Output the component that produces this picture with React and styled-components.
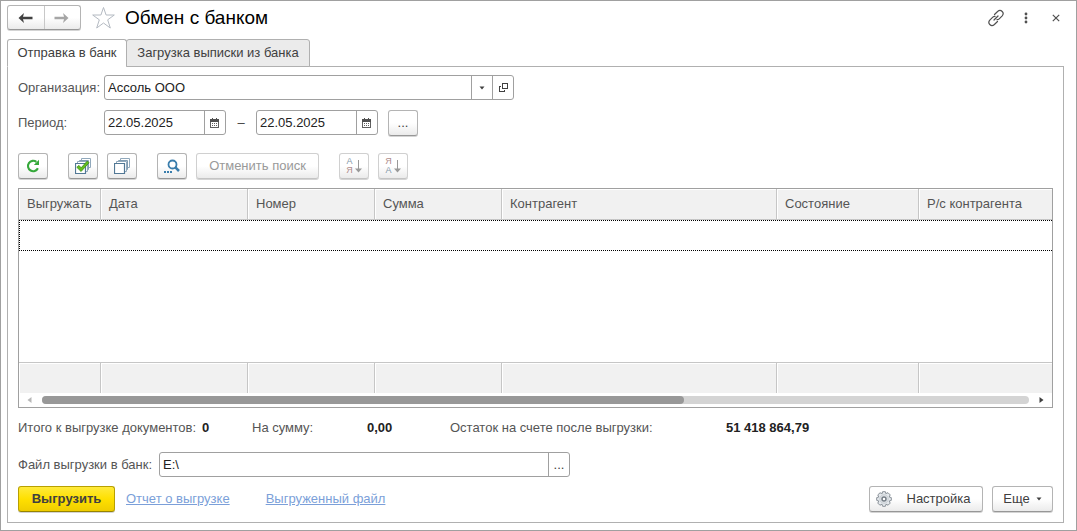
import React from "react";
import styled, { createGlobalStyle, css } from "styled-components";

const GlobalStyle = createGlobalStyle`
  * { box-sizing: border-box; }
  body {
    margin: 0;
    background: #fff;
    color: #404040;
    font: 13px/16px "Liberation Sans", Arial, sans-serif;
  }
  button, input { font: inherit; color: inherit; margin: 0; }
`;

const Window = styled.div`
  min-height: 100vh;
  display: flex;
  flex-direction: column;
  padding: 4px 12px 7px 6px;
  border: 1px solid #a0a0a0;
`;

const TitleBar = styled.header`
  display: flex;
  align-items: center;
  height: 25px;
`;

const raised = css`
  background: linear-gradient(#fff 0%, #fff 50%, #ebebeb 100%);
  border: 1px solid #b4b4b4;
  border-bottom-color: #979797;
  border-radius: 3px;
  box-shadow: 0 1px 0 #d4d4d4;
`;

const History = styled.nav`
  display: flex;
  width: 74px;
  height: 25px;
  ${raised}
`;

const HistoryButton = styled.button`
  flex: 1;
  display: grid;
  place-items: center;
  padding: 0;
  border: 0;
  background: none;
  color: #404040;
  &:disabled { color: #a6a6a6; }
  & + & { border-left: 1px solid #c8c8c8; }
`;

const PlainButton = styled.button`
  display: grid;
  place-items: center;
  width: 24px;
  height: 24px;
  padding: 0;
  border: 0;
  background: none;
  color: #505050;
`;

const Favorite = styled(PlainButton)`
  margin-left: 10px;
`;

const Title = styled.h1`
  flex: 1;
  margin: 0 0 0 10px;
  color: #000;
  font-size: 19px;
  line-height: 24px;
  font-weight: 400;
`;

const WindowTools = styled.div`
  display: flex;
  gap: 6px;
  margin-right: -4px;
`;

const Tabs = styled.div`
  display: flex;
  margin-top: 9px;
`;

const Tab = styled.button`
  position: relative;
  width: ${(p) => p.$width}px;
  height: 28px;
  margin-right: -1px;
  padding: 0 0 1px;
  border: 1px solid #b0b0b0;
  border-bottom-color: ${(p) => (p.$active ? "#fff" : "#b0b0b0")};
  border-radius: 3px 3px 0 0;
  background: ${(p) => (p.$active ? "#fff" : "#ebebeb")};
  z-index: 1;
`;

const Panel = styled.main`
  flex: 1;
  display: flex;
  flex-direction: column;
  margin-top: -1px;
  padding: 8px 10px 10px;
  border: 1px solid #b0b0b0;
`;

const FieldRow = styled.div`
  display: flex;
  align-items: center;
  height: 25px;
  margin-top: ${(p) => p.$top || 0}px;
`;

const Label = styled.label`
  width: ${(p) => p.$width}px;
  flex: none;
  color: #555;
`;

const Field = styled.div`
  display: flex;
  width: ${(p) => p.$width}px;
  height: 25px;
  border: 1px solid #a0a0a0;
  border-radius: 3px;
  background: #fff;
`;

const Input = styled.input`
  flex: 1;
  min-width: 0;
  padding: 0 3px;
  border: 0;
  outline: 0;
  background: none;
  color: #222;
`;

const FieldButton = styled.button`
  display: grid;
  place-items: center;
  width: 21px;
  padding: 0;
  border: 0;
  border-left: 1px solid #a0a0a0;
  background: none;
`;

const Dash = styled.span`
  width: 30px;
  text-align: center;
`;

const Button = styled.button`
  display: flex;
  align-items: center;
  justify-content: center;
  flex: none;
  width: ${(p) => p.$width || 30}px;
  height: 26px;
  margin-left: ${(p) => p.$left || 0}px;
  padding: 0;
  ${raised}
  &:disabled {
    color: #999;
    border-color: #d0d0d0;
    border-bottom-color: #c4c4c4;
  }
`;

const PrimaryButton = styled(Button)`
  border-color: #b8a000;
  border-bottom-color: #978400;
  background: linear-gradient(#ffea3c, #ffe000 50%, #efcd00);
  font-weight: 700;
`;

const Toolbar = styled.div`
  display: flex;
  margin-top: 18px;
`;

const TableFrame = styled.section`
  flex: 1;
  display: flex;
  flex-direction: column;
  min-height: 219px;
  margin-top: 9px;
  border: 1px solid #a0a0a0;
`;

const TableArea = styled.div`
  flex: 1;
  display: grid;
`;

const Table = styled.table`
  width: 100%;
  table-layout: fixed;
  border-collapse: separate;
  border-spacing: 0;
`;

const Column = styled.col`
  width: ${(p) => (p.$width ? `${p.$width}px` : "auto")};
`;

const shaded = css`
  background: #f1f1f1;
  border-right: 1px solid #c6c6c6;
  box-shadow: inset 1px 1px 0 #fff;
  &:last-child { border-right: 0; }
`;

const HeadCell = styled.th`
  height: 31px;
  padding: 0 8px;
  border-bottom: 1px solid #c6c6c6;
  color: #555;
  font-weight: 400;
  text-align: left;
  white-space: nowrap;
  ${shaded}
`;

const ActiveCell = styled.td`
  height: 31px;
  padding: 0;
  border: 1px dotted #000;
  border-right: 0;
`;

const EmptyCell = styled.td`
  padding: 0;
`;

const FootCell = styled.td`
  height: 31px;
  padding: 0;
  border-top: 1px solid #c6c6c6;
  ${shaded}
`;

const Scroll = styled.div`
  display: flex;
  align-items: center;
  justify-content: space-between;
  height: 14px;
  padding: 0 8px;
`;

const Track = styled.div`
  flex: 1;
  height: 8px;
  margin: 0 10px;
  border-radius: 4px;
  background: #d4d4d4;
`;

const Thumb = styled.div`
  width: 65%;
  height: 8px;
  border-radius: 4px;
  background: #989898;
`;

const Totals = styled.dl`
  display: flex;
  margin: 12px 0 0;
`;

const Term = styled.dt`
  width: ${(p) => p.$width}px;
  color: #555;
`;

const Value = styled.dd`
  width: ${(p) => p.$width}px;
  margin: 0;
  color: #222;
  font-weight: 700;
`;

const Footer = styled.footer`
  display: flex;
  align-items: center;
  margin-top: 9px;
`;

const Link = styled.a`
  margin-left: ${(p) => p.$left}px;
  color: #7b9fd9;
  text-decoration: underline;
`;

const Spacer = styled.div`
  flex: 1;
`;

const ButtonText = styled.span`
  margin: 0 ${(p) => p.$right || 0}px 0 ${(p) => p.$left || 0}px;
`;

const SortIcon = styled.span`
  display: flex;
  align-items: center;
  gap: 2px;
`;

const SortLetters = styled.span`
  display: flex;
  flex-direction: column;
  font-size: 9px;
  line-height: 9px;
`;

const SortLetter = styled.span`
  color: ${(p) => (p.$last ? "#b08c8c" : "#8698aa")};
`;

const Arrow = ({ flip }) => (
  <svg width="16" height="12" viewBox="0 0 16 12">
    <path
      d="M0.5 6 6 1 5 4.7H14.5V7.3H5L6 11Z"
      fill="currentColor"
      transform={flip ? "matrix(-1 0 0 1 15 0)" : undefined}
    />
  </svg>
);

const Star = () => (
  <svg width="24" height="24" viewBox="0 0 24 24" fill="none" stroke="#b4bac2">
    <path d="M12.5 1.5 15.1 9H23.3L16.7 13.8 19.3 22 12.5 17 5.7 22 8.3 13.8 1.7 9H9.9Z" />
  </svg>
);

const LinkIcon = () => (
  <svg width="18" height="18" viewBox="0 0 18 18" fill="none" stroke="#505050" strokeWidth="1.2" strokeLinecap="round">
    <path d="M7.5 5.5 10.6 2.5C12 1.3 14 1.3 15.2 2.5 16.4 3.7 16.4 5.4 15.2 6.8L12.2 9.8C11.5 10.5 10.8 10.7 10 10.6" />
    <path d="M10.5 12.5 7.4 15.5C6 16.7 4 16.7 2.8 15.5 1.6 14.3 1.6 12.6 2.8 11.2L5.8 8.2C6.5 7.5 7.2 7.3 8 7.4" />
    <path d="M7 11 11 7" />
  </svg>
);

const Dots = () => (
  <svg width="4" height="12" viewBox="0 0 4 12" fill="#505050">
    <circle cx="2" cy="2" r="1.4" />
    <circle cx="2" cy="6" r="1.4" />
    <circle cx="2" cy="10" r="1.4" />
  </svg>
);

const Close = () => (
  <svg width="8" height="8" viewBox="0 0 8 8" stroke="#505050" strokeWidth="1.2">
    <path d="M0.8 0.8 7.2 7.2M7.2 0.8 0.8 7.2" />
  </svg>
);

const Caret = () => (
  <svg width="6" height="4" viewBox="0 0 6 4">
    <path d="M0.5 0.5H5.5L3 3.5Z" fill="#404040" />
  </svg>
);

const OpenIcon = () => (
  <svg width="9" height="9" viewBox="0 0 9 9" fill="none" stroke="#404040" shapeRendering="crispEdges">
    <path d="M3.5 0.5H8.5V5.5H3.5ZM2 3.5H0.5V8.5H5.5V7" />
  </svg>
);

const Calendar = () => (
  <svg width="10" height="10" viewBox="0 0 10 10" shapeRendering="crispEdges">
    <path d="M0.5 1.5H8.5V9.5H0.5Z" fill="#fff" stroke="#606060" />
    <path d="M0 1H9V4H0ZM2 0H3V1H2ZM6 0H7V1H6Z" fill="#505050" />
    <path d="M2 5.5H7M2 7.5H7" stroke="#606060" strokeDasharray="1 1" />
  </svg>
);

const Refresh = () => (
  <svg width="14" height="14" viewBox="0 0 14 14">
    <path d="M11.9 9.2A5.2 5.2 0 1 1 10.4 2.9" fill="none" stroke="#35a83a" strokeWidth="2.1" />
    <path d="M13 0.8V6H7.8Z" fill="#35a83a" />
  </svg>
);

const Sheets = ({ checked }) => (
  <svg width="16" height="16" viewBox="0 0 16 16" fill="#fff" stroke="#527895">
    <path d="M6.5 0.5H15.5V9.5H6.5Z" stroke="#91a9bc" />
    <path d="M4.5 2.5H13.5V11.5H4.5Z" stroke="#819cb1" />
    <path d="M2.5 3.5H12.5V13.5H2.5Z" stroke="#91a9bc" />
    <path d="M0.5 5.5H10.5V15.5H0.5Z" strokeWidth="1.2" />
    {checked && (
      <path d="M1.8 9.3 4 7.4 6.1 9.8 12.3 3 14 4.8 6.1 13.5Z" fill="#63be1c" stroke="#398b1a" strokeWidth="0.8" />
    )}
  </svg>
);

const Search = () => (
  <svg width="16" height="15" viewBox="0 0 16 15" fill="none" stroke="#397dac">
    <circle cx="8.5" cy="5.5" r="4" strokeWidth="1.8" />
    <path d="M11.4 8.4 15 12" strokeWidth="2.5" />
    <path d="M0 13H8" strokeWidth="2" strokeDasharray="2 1" />
  </svg>
);

const Sort = ({ letters }) => (
  <SortIcon aria-hidden="true">
    <SortLetters>
      {letters.map((letter) => (
        <SortLetter key={letter} $last={letter === "Я"}>{letter}</SortLetter>
      ))}
    </SortLetters>
    <svg width="7" height="14" viewBox="0 0 7 14">
      <path d="M3.5 1V11" stroke="#999" />
      <path d="M0 9.5H7L3.5 13.5Z" fill="#999" />
    </svg>
  </SortIcon>
);

const Gear = () => (
  <svg width="16" height="16" viewBox="0 0 16 16" fill="#e4e8ec" stroke="#8a9299">
    <path d="M6.6 0.7H9.4L9.8 2.6 12 1.7 14.2 3.9 13.2 6 15.3 6.6V9.4L13.2 10 14.2 12.1 12.1 14.2 10 13.2 9.4 15.3H6.6L6 13.2 3.9 14.2 1.8 12.1 2.8 10 0.7 9.4V6.6L2.8 6 1.8 3.9 4 1.8 6.2 2.6Z" />
    <circle cx="8" cy="8" r="4.2" stroke="#c5cbd0" />
    <circle cx="8" cy="8" r="2" fill="#fff" stroke="#747d85" strokeWidth="1.5" />
  </svg>
);

const ScrollArrow = ({ right }) => (
  <svg width="5" height="6" viewBox="0 0 5 6">
    <path d={right ? "M0.5 0V6L4.5 3Z" : "M4.5 0V6L0.5 3Z"} fill={right ? "#404040" : "#b8b8b8"} />
  </svg>
);

const columns = [
  ["Выгружать", 82],
  ["Дата", 147],
  ["Номер", 127],
  ["Сумма", 127],
  ["Контрагент", 275],
  ["Состояние", 142],
  ["Р/с контрагента", 0],
];

const DateField = ({ id, label }) => (
  <Field $width={122}>
    <Input id={id} aria-label={label} defaultValue="22.05.2025" />
    <FieldButton aria-label="Выбрать дату"><Calendar /></FieldButton>
  </Field>
);

export default function App() {
  return (
    <>
      <GlobalStyle />
      <Window>
        <TitleBar>
          <History>
            <HistoryButton aria-label="Назад"><Arrow /></HistoryButton>
            <HistoryButton aria-label="Вперед" disabled><Arrow flip /></HistoryButton>
          </History>
          <Favorite aria-label="В избранное"><Star /></Favorite>
          <Title>Обмен с банком</Title>
          <WindowTools>
            <PlainButton aria-label="Получить ссылку"><LinkIcon /></PlainButton>
            <PlainButton aria-label="Меню"><Dots /></PlainButton>
            <PlainButton aria-label="Закрыть"><Close /></PlainButton>
          </WindowTools>
        </TitleBar>

        <Tabs role="tablist">
          <Tab role="tab" aria-selected="true" $active $width={120}>Отправка в банк</Tab>
          <Tab role="tab" aria-selected="false" $width={184}>Загрузка выписки из банка</Tab>
        </Tabs>

        <Panel>
          <FieldRow>
            <Label htmlFor="organization" $width={86}>Организация:</Label>
            <Field $width={410}>
              <Input id="organization" defaultValue="Ассоль ООО" />
              <FieldButton aria-label="Выбрать из списка"><Caret /></FieldButton>
              <FieldButton aria-label="Открыть"><OpenIcon /></FieldButton>
            </Field>
          </FieldRow>
          <FieldRow $top={10}>
            <Label htmlFor="period-start" $width={86}>Период:</Label>
            <DateField id="period-start" label="Начало периода" />
            <Dash>–</Dash>
            <DateField id="period-end" label="Конец периода" />
            <Button $left={10} aria-label="Выбрать период">...</Button>
          </FieldRow>

          <Toolbar>
            <Button aria-label="Обновить"><Refresh /></Button>
            <Button $left={20} aria-label="Установить флажки"><Sheets checked /></Button>
            <Button $left={9} aria-label="Снять флажки"><Sheets /></Button>
            <Button $left={20} aria-label="Найти"><Search /></Button>
            <Button $left={9} $width={123} disabled>Отменить поиск</Button>
            <Button $left={20} disabled aria-label="Сортировать по возрастанию">
              <Sort letters={["А", "Я"]} />
            </Button>
            <Button $left={9} disabled aria-label="Сортировать по убыванию">
              <Sort letters={["Я", "А"]} />
            </Button>
          </Toolbar>

          <TableFrame>
            <TableArea>
              <Table>
                <colgroup>
                  {columns.map(([name, width]) => <Column key={name} $width={width} />)}
                </colgroup>
                <thead>
                  <tr>{columns.map(([name]) => <HeadCell key={name}>{name}</HeadCell>)}</tr>
                </thead>
                <tbody>
                  <tr><ActiveCell colSpan={columns.length} /></tr>
                  <tr><EmptyCell colSpan={columns.length} /></tr>
                </tbody>
                <tfoot>
                  <tr>{columns.map(([name]) => <FootCell key={name} />)}</tr>
                </tfoot>
              </Table>
            </TableArea>
            <Scroll>
              <ScrollArrow />
              <Track><Thumb /></Track>
              <ScrollArrow right />
            </Scroll>
          </TableFrame>

          <Totals>
            <Term $width={184}>Итого к выгрузке документов:</Term>
            <Value $width={50}>0</Value>
            <Term $width={115}>На сумму:</Term>
            <Value $width={83}>0,00</Value>
            <Term $width={276}>Остаток на счете после выгрузки:</Term>
            <Value $width={100}>51 418 864,79</Value>
          </Totals>

          <FieldRow $top={16}>
            <Label htmlFor="file" $width={141}>Файл выгрузки в банк:</Label>
            <Field $width={411}>
              <Input id="file" defaultValue="E:\" />
              <FieldButton aria-label="Выбрать файл">...</FieldButton>
            </Field>
          </FieldRow>

          <Footer>
            <PrimaryButton $width={97}>Выгрузить</PrimaryButton>
            <Link href="#report" $left={11}>Отчет о выгрузке</Link>
            <Link href="#file" $left={36}>Выгруженный файл</Link>
            <Spacer />
            <Button $width={114}><Gear /><ButtonText $left={15} $right={6}>Настройка</ButtonText></Button>
            <Button $left={9} $width={61}><ButtonText $right={6}>Еще</ButtonText><Caret /></Button>
          </Footer>
        </Panel>
      </Window>
    </>
  );
}
